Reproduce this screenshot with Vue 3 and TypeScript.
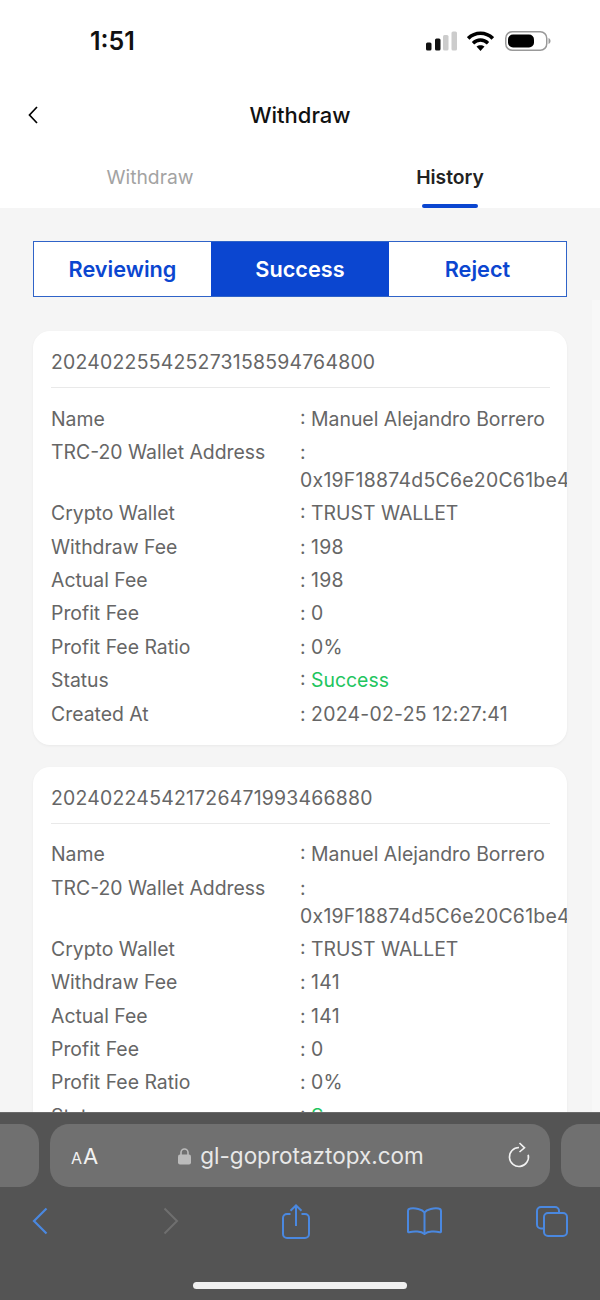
<script setup lang="ts">
interface Row { label: string; value: string; ok?: boolean; wrap?: boolean; num?: boolean }
interface Rec { id: string; rows: Row[] }
const addr = '0x19F18874d5C6e20C61be4Dd5a1c2b3'
const make = (id: string, fee: string, at: string): Rec => ({
  id,
  rows: [
    { label: 'Name', value: 'Manuel Alejandro Borrero' },
    { label: 'TRC-20 Wallet Address', value: addr, wrap: true },
    { label: 'Crypto Wallet', value: 'TRUST WALLET' },
    { label: 'Withdraw Fee', value: fee, num: true },
    { label: 'Actual Fee', value: fee, num: true },
    { label: 'Profit Fee', value: '0', num: true },
    { label: 'Profit Fee Ratio', value: '0%', num: true },
    { label: 'Status', value: 'Success', ok: true },
    { label: 'Created At', value: at, num: true }
  ]
})
const records: Rec[] = [
  make('202402255425273158594764800', '198', '2024-02-25 12:27:41'),
  make('202402245421726471993466880', '141', '2024-02-24 12:27:41')
]
</script>

<template>
  <div class="phone">
    <header class="top">
      <div class="status">
        <span class="time">1:51</span>
        <div class="status-icons">
          <svg width="31" height="20" viewBox="0 0 31 20">
            <rect x="0" y="11.500" width="5.500" height="8" rx="1.500" fill="#111" />
            <rect x="9" y="7.500" width="5.500" height="12" rx="1.500" fill="#111" />
            <rect x="17" y="4" width="5.500" height="15.500" rx="1.500" fill="#ccc" />
            <rect x="25.500" y="0.500" width="5.500" height="19" rx="1.500" fill="#ccc" />
          </svg>
          <svg class="wifi" width="27" height="20" viewBox="0 0 27 20">
            <path d="M1.200 7.400C8.200 .6 18.800 .6 25.800 7.400" fill="none" stroke="#000" stroke-width="3.600" />
            <path d="M6 12.200C10.400 8 16.600 8 21 12.200" fill="none" stroke="#000" stroke-width="3.400" />
            <path d="M9.500 15.500C11.800 13.700 15.200 13.700 17.500 15.500L13.500 20Z" fill="#000" />
          </svg>
          <svg width="46" height="20" viewBox="0 0 46 20">
            <rect x="0.750" y="0.750" width="41" height="18.500" rx="6.500" fill="none" stroke="#999" stroke-width="1.500" />
            <rect x="3" y="3.500" width="26" height="13" rx="5" fill="#000" />
            <path d="M43.500 7v6c1.300-.6 2-1.700 2-3s-.7-2.400-2-3Z" fill="#999" />
          </svg>
        </div>
      </div>
      <div class="nav">
        <svg class="back" width="12" height="20" viewBox="0 0 12 20">
          <path d="M10 2 2.500 10l7.500 8" fill="none" stroke="#000" stroke-width="1.700" />
        </svg>
        <span class="title">Withdraw</span>
      </div>
      <div class="tabs">
        <div class="tab">Withdraw</div>
        <div class="tab on">History</div>
      </div>
    </header>

    <main class="body">
      <div class="segments">
        <div class="seg">Reviewing</div>
        <div class="seg active">Success</div>
        <div class="seg">Reject</div>
      </div>
      <section v-for="r in records" :key="r.id" class="card">
        <div class="card-id">{{ r.id }}</div>
        <div class="rows">
          <div v-for="row in r.rows" :key="row.label" class="row">
            <span class="label">{{ row.label }}</span>
            <span class="value">
              <template v-if="row.wrap">
                <span class="colon-line">:</span>
                <span class="addr">{{ row.value }}</span>
              </template>
              <template v-else>: <span :class="{ green: row.ok, num: row.num }">{{ row.value }}</span></template>
            </span>
          </div>
        </div>
      </section>
    </main>

    <div class="scroll-edge"></div>

    <footer class="safari">
      <div class="url-row">
        <div class="side-pill"></div>
        <div class="url">
          <span class="aa"><small>A</small>A</span>
          <span class="domain">
            <svg class="lock" width="13" height="18" viewBox="0 0 13 18">
              <path d="M3 8V5.500a3.500 3.500 0 0 1 7 0V8" fill="none" stroke="#bbb" stroke-width="1.600" />
              <rect x="0" y="7.500" width="13" height="10" rx="2" fill="#bbb" />
            </svg>
            gl-goprotaztopx.com
          </span>
          <svg class="reload" width="24" height="28" viewBox="0 0 24 28">
            <path d="M12 5.500A9.500 9.500 0 1 0 21.200 12.800" fill="none" stroke="#f2f2f2" stroke-width="1.600" />
            <path d="M12.500 1l5 4.800-5 4.200" fill="none" stroke="#f2f2f2" stroke-width="1.600" />
          </svg>
        </div>
        <div class="side-pill"></div>
      </div>
      <div class="tools">
        <svg width="18" height="30" viewBox="0 0 18 30">
          <path d="M15.500 2.500 3 15l12.500 12.500" fill="none" stroke="#4a88e0" stroke-width="2.200" />
        </svg>
        <svg class="fwd" width="18" height="30" viewBox="0 0 18 30">
          <path d="M2.500 2.500 15 15 2.500 27.500" fill="none" stroke="#6f6f6f" stroke-width="2" />
        </svg>
        <svg width="28" height="35" viewBox="0 0 28 35">
          <g fill="none" stroke="#4a88e0" stroke-width="2">
            <path d="M8.500 10H5a4 4 0 0 0-4 4v16a4 4 0 0 0 4 4h18a4 4 0 0 0 4-4V14a4 4 0 0 0-4-4h-3.500" />
            <path d="M14 22V1.500M8.500 6.800 14 1.500l5.500 5.300" />
          </g>
        </svg>
        <svg width="35" height="28" viewBox="0 0 35 28">
          <g fill="none" stroke="#4a88e0" stroke-width="2">
            <path d="M17.500 5.500C15 2 8 .9 3.500 1.500 2 1.700 1 2.700 1 4v20.500c0 .7.500 1 1.200.8 4.800-1.300 11.800-1.100 15.300 1.700 3.500-2.800 10.500-3 15.300-1.700.7.200 1.200-.1 1.200-.8V4c0-1.300-1-2.300-2.500-2.500C27 .9 20 2 17.500 5.500Z" />
            <path d="M17.500 5.500V26" />
          </g>
        </svg>
        <svg width="32" height="31" viewBox="0 0 32 31">
          <g fill="none" stroke="#4a88e0" stroke-width="2">
            <path d="M7 22.500H5a4 4 0 0 1-4-4V5a4 4 0 0 1 4-4h14a4 4 0 0 1 4 4v2" />
            <rect x="8" y="7" width="23" height="23" rx="4" />
          </g>
        </svg>
      </div>
      <div class="home"></div>
    </footer>
  </div>
</template>

<style>
html, body { margin: 0; background: #f5f5f5; }
</style>

<style scoped>
.phone {
  position: relative;
  width: 600px;
  height: 1300px;
  overflow: hidden;
  background: #f5f5f5;
  font-family: Inter, "Liberation Sans", sans-serif;
}
.top { background: #fff; height: 208px; display: flex; flex-direction: column; }
.status {
  height: 81px;
  padding: 0 49px 0 90px;
  display: flex;
  align-items: center;
  justify-content: space-between;
  box-sizing: border-box;
}
.time { font-size: 25px; font-weight: 600; color: #111; }
.status-icons { display: flex; align-items: center; gap: 10px; }
.wifi { margin-right: 1px; }
.nav { height: 68px; position: relative; display: flex; align-items: center; justify-content: center; }
.back { position: absolute; left: 27px; top: 24px; }
.title { font-size: 22px; font-weight: 500; color: #111; }
.tabs { display: flex; flex: 1; }
.tab {
  flex: 1;
  text-align: center;
  font-size: 19.300px;
  color: #a3a3a3;
  padding-top: 16px;
  position: relative;
}
.tab.on { color: #222; font-weight: 600; }
.tab.on::after {
  content: "";
  position: absolute;
  left: 122px;
  bottom: 0;
  width: 56px;
  height: 4px;
  border-radius: 2px;
  background: #0b46d0;
}
.body { padding: 33px 33px 0; }
.segments {
  display: flex;
  height: 56px;
  box-sizing: border-box;
  border: 1.500px solid #2f63c8;
  background: #fff;
}
.seg {
  flex: 1;
  display: flex;
  align-items: center;
  justify-content: center;
  font-size: 21.700px;
  font-weight: 600;
  color: #0b46d0;
}
.seg.active { background: #0b46d0; color: #fff; flex: 0 0 178px; }
.card {
  margin-top: 34px;
  background: #fff;
  border-radius: 17px;
  padding: 17px 17px 17px 18px;
  box-shadow: 0 1px 3px rgba(0, 0, 0, .05);
  overflow: hidden;
}
.card + .card { margin-top: 22px; }
.card-id {
  font-size: 19.400px;
  letter-spacing: .24px;
  color: #666;
  line-height: 28px;
  padding-bottom: 11px;
  border-bottom: 1px solid #e9e9e9;
  margin-bottom: 16.500px;
}
.rows { display: flex; flex-direction: column; gap: 5.400px; }
.row { display: flex; font-size: 19.400px; line-height: 28px; color: #666; white-space: nowrap; }
.label { flex: 0 0 249px; }
.value { flex: 1; min-width: 0; }
.colon-line, .addr { display: block; }
.addr, .num { letter-spacing: .28px; }
.green { color: #22c55e; }
.scroll-edge {
  position: absolute;
  right: 0;
  top: 300px;
  bottom: 0;
  width: 8px;
  background: #f8f8f8;
}
.safari {
  position: absolute;
  left: 0;
  right: 0;
  bottom: 0;
  height: 188px;
  background: #545454;
  border-top: 1px solid #6a6a6a;
  box-sizing: border-box;
}
.url-row {
  display: flex;
  gap: 11px;
  padding-top: 11px;
  height: 74px;
  box-sizing: border-box;
  margin: 0 -100px;
  justify-content: center;
}
.url {
  flex: 0 0 500px;
  height: 63px;
  border-radius: 19px;
  background: #707070;
  display: flex;
  align-items: center;
  position: relative;
  justify-content: center;
}
.side-pill { flex: 0 0 139px; height: 63px; background: #707070; border-radius: 19px; }
.aa { position: absolute; left: 21px; font-size: 22px; color: #f2f2f2; }
.aa small { font-size: 16px; margin-right: 1px; }
.domain { display: flex; align-items: center; gap: 9px; padding-left: 2px; font-size: 22.500px; color: #e8e8e8; }
.lock { flex: none; }
.reload { position: absolute; right: 19px; top: 18px; }
.tools {
  display: grid;
  grid-template-columns: repeat(5, 128px);
  justify-items: center;
  align-items: center;
  margin-left: -24px;
  height: 68px;
}
.fwd { margin-left: 6px; }
.home {
  position: absolute;
  left: 193px;
  bottom: 11px;
  width: 214px;
  height: 7px;
  border-radius: 4px;
  background: #f0f0f0;
}
</style>
